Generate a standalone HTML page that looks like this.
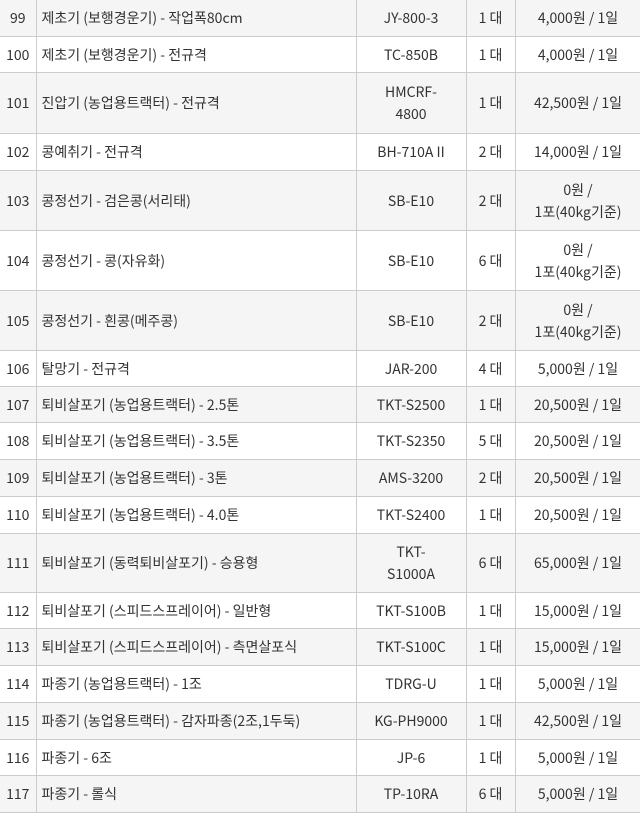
<!DOCTYPE html>
<html><head><meta charset="utf-8"><style>
body{margin:0;width:640px;height:810px;overflow:hidden;background:#fff;font-family:"Noto Sans CJK KR","Liberation Sans",sans-serif;font-size:14px;color:#333}
table{border-collapse:collapse;width:641px;table-layout:fixed;position:absolute;left:0;top:-1px}
td{border:1px solid #ccc;padding:0 4px;text-align:center;line-height:22px;box-sizing:border-box;overflow:hidden;white-space:nowrap}
td:first-child{border-left:none;padding:0;}
td:nth-child(2){text-align:left;padding-left:5px}
tr:nth-child(odd) td{background:#f5f5f5}
</style></head><body>
<table>
<colgroup><col style="width:36px"><col style="width:320px"><col style="width:110px"><col style="width:49px"><col style="width:126px"></colgroup>
<tr style="height:37px"><td>99</td><td>제초기 (보행경운기) - 작업폭80cm</td><td>JY-800-3</td><td>1 대</td><td>4,000원 / 1일</td></tr>
<tr style="height:36px"><td>100</td><td>제초기 (보행경운기) - 전규격</td><td>TC-850B</td><td>1 대</td><td>4,000원 / 1일</td></tr>
<tr style="height:61px"><td>101</td><td>진압기 (농업용트랙터) - 전규격</td><td>HMCRF-<br>4800</td><td>1 대</td><td>42,500원 / 1일</td></tr>
<tr style="height:37px"><td>102</td><td>콩예취기 - 전규격</td><td>BH-710A II</td><td>2 대</td><td>14,000원 / 1일</td></tr>
<tr style="height:60px"><td>103</td><td>콩정선기 - 검은콩(서리태)</td><td>SB-E10</td><td>2 대</td><td>0원 /<br>1포(40kg기준)</td></tr>
<tr style="height:60px"><td>104</td><td>콩정선기 - 콩(자유화)</td><td>SB-E10</td><td>6 대</td><td>0원 /<br>1포(40kg기준)</td></tr>
<tr style="height:60px"><td>105</td><td>콩정선기 - 흰콩(메주콩)</td><td>SB-E10</td><td>2 대</td><td>0원 /<br>1포(40kg기준)</td></tr>
<tr style="height:36px"><td>106</td><td>탈망기 - 전규격</td><td>JAR-200</td><td>4 대</td><td>5,000원 / 1일</td></tr>
<tr style="height:36px"><td>107</td><td>퇴비살포기 (농업용트랙터) - 2.5톤</td><td>TKT-S2500</td><td>1 대</td><td>20,500원 / 1일</td></tr>
<tr style="height:37px"><td>108</td><td>퇴비살포기 (농업용트랙터) - 3.5톤</td><td>TKT-S2350</td><td>5 대</td><td>20,500원 / 1일</td></tr>
<tr style="height:37px"><td>109</td><td>퇴비살포기 (농업용트랙터) - 3톤</td><td>AMS-3200</td><td>2 대</td><td>20,500원 / 1일</td></tr>
<tr style="height:37px"><td>110</td><td>퇴비살포기 (농업용트랙터) - 4.0톤</td><td>TKT-S2400</td><td>1 대</td><td>20,500원 / 1일</td></tr>
<tr style="height:59px"><td>111</td><td>퇴비살포기 (동력퇴비살포기) - 승용형</td><td>TKT-<br>S1000A</td><td>6 대</td><td>65,000원 / 1일</td></tr>
<tr style="height:36px"><td>112</td><td>퇴비살포기 (스피드스프레이어) - 일반형</td><td>TKT-S100B</td><td>1 대</td><td>15,000원 / 1일</td></tr>
<tr style="height:37px"><td>113</td><td>퇴비살포기 (스피드스프레이어) - 측면살포식</td><td>TKT-S100C</td><td>1 대</td><td>15,000원 / 1일</td></tr>
<tr style="height:37px"><td>114</td><td>파종기 (농업용트랙터) - 1조</td><td>TDRG-U</td><td>1 대</td><td>5,000원 / 1일</td></tr>
<tr style="height:37px"><td>115</td><td>파종기 (농업용트랙터) - 감자파종(2조,1두둑)</td><td>KG-PH9000</td><td>1 대</td><td>42,500원 / 1일</td></tr>
<tr style="height:36px"><td>116</td><td>파종기 - 6조</td><td>JP-6</td><td>1 대</td><td>5,000원 / 1일</td></tr>
<tr style="height:37px"><td>117</td><td>파종기 - 롤식</td><td>TP-10RA</td><td>6 대</td><td>5,000원 / 1일</td></tr>
</table>
</body></html>
